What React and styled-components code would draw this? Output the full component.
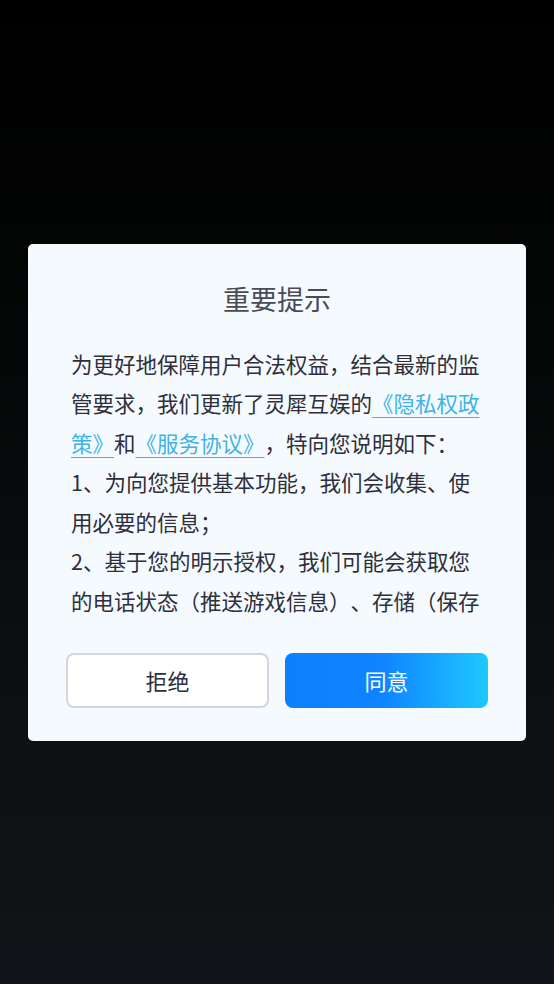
import React from 'react';
import styled, { createGlobalStyle } from 'styled-components';

const GlobalStyle = createGlobalStyle`
  html, body {
    margin: 0;
    padding: 0;
    height: 100%;
  }
  body {
    font-family: "Noto Sans CJK SC", "Noto Sans", sans-serif;
  }
  #root {
    height: 100%;
  }
`;

const Screen = styled.div`
  height: 100%;
  min-height: 984px;
  display: flex;
  align-items: center;
  justify-content: center;
  background: linear-gradient(180deg, #000 0%, #030404 25%, #0d0f11 70%, #111418 100%);
`;

const Dialog = styled.div`
  width: 498px;
  box-sizing: border-box;
  padding: 37px 38px 33px;
  background: #f5faff;
  border-radius: 5px;
  display: flex;
  flex-direction: column;
`;

const Title = styled.h2`
  margin: 0;
  font-size: 27px;
  line-height: 36px;
  font-weight: 400;
  color: #4a4b55;
  text-align: center;
`;

const Body = styled.div`
  margin: 27px 5px 0;
  height: 276px;
  overflow-y: auto;
  font-size: 21.5px;
  line-height: 39.5px;
  color: #2e2f3a;
  text-spacing-trim: space-all;
  &::-webkit-scrollbar {
    display: none;
  }
`;

const Para = styled.p`
  margin: 0;
`;

const Link = styled.a`
  color: #3fb3e6;
  text-decoration: underline;
  text-underline-offset: 5px;
  text-decoration-thickness: 1px;
`;

const Actions = styled.div`
  margin-top: 33px;
  display: grid;
  grid-template-columns: 1fr 1fr;
  gap: 16px;
`;

const Button = styled.button`
  height: 55px;
  border-radius: 8px;
  font-family: inherit;
  font-size: 22px;
  cursor: pointer;
  box-sizing: border-box;
  border: ${(p) => (p.$primary ? 'none' : '2px solid #d3d6da')};
  color: ${(p) => (p.$primary ? '#fff' : '#2e2f3a')};
  background: ${(p) =>
    p.$primary
      ? 'linear-gradient(90deg, #0c7fff 0%, #0f84ff 48%, #1ec8ff 100%)'
      : '#fff'};
`;

const App = () => (
  <>
    <GlobalStyle />
    <Screen>
      <Dialog>
        <Title>重要提示</Title>
        <Body>
          <Para>
            为更好地保障用户合法权益，结合最新的监管要求，我们更新了灵犀互娱的
            <Link>《隐私权政策》</Link>和<Link>《服务协议》</Link>，特向您说明如下：
          </Para>
          <Para>1、为向您提供基本功能，我们会收集、使用必要的信息；</Para>
          <Para>
            2、基于您的明示授权，我们可能会获取您的电话状态（推送游戏信息）、存储（保存游戏截图、下载资源）等权限，您有权拒绝或取消授权；
          </Para>
          <Para>3、我们会采取业界先进的安全措施保护您的信息安全；</Para>
          <Para>4、未经您同意，我们不会从第三方获取、共享或对外提供您的信息。</Para>
        </Body>
        <Actions>
          <Button>拒绝</Button>
          <Button $primary>同意</Button>
        </Actions>
      </Dialog>
    </Screen>
  </>
);

export default App;
